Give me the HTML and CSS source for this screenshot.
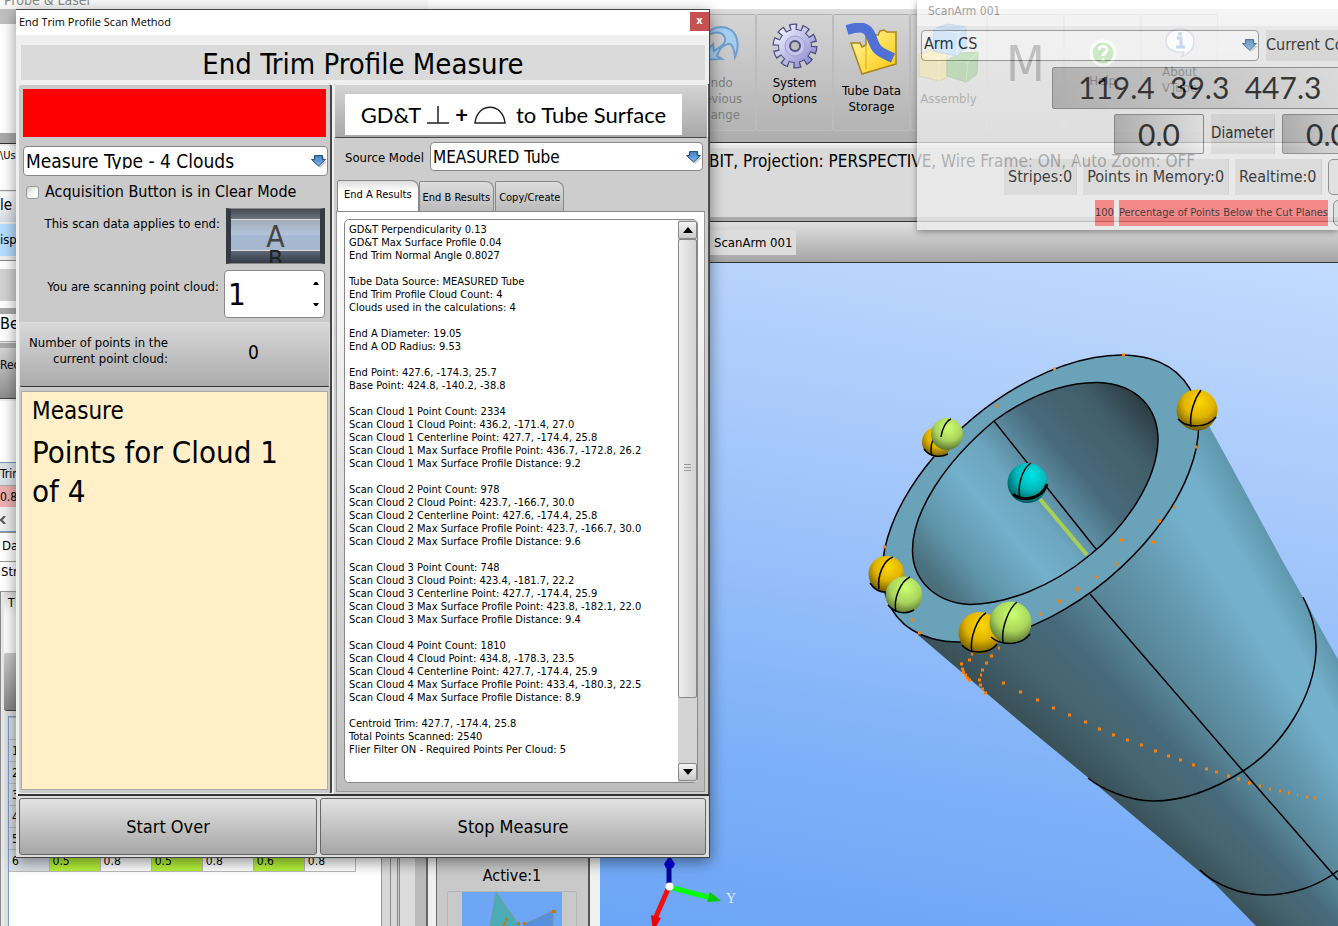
FILE: index.html
```html
<!DOCTYPE html>
<html lang="en">
<head>
<meta charset="utf-8">
<title>End Trim Profile Scan Method</title>
<link rel="stylesheet" href="styles.css">
</head>
<body>
<svg width="0" height="0" class="defs" aria-hidden="true">
  <defs>
    <linearGradient id="arrowFill" x1="0" y1="0" x2="0" y2="1"><stop offset="0" stop-color="#2c6cae"/><stop offset="1" stop-color="#8fc0ee"/></linearGradient>
    <symbol id="dropArrow" viewBox="0 0 16 14">
      <path d="M4 3h9v5h3l-7 6-7-6h2z" fill="#000" opacity=".2"/>
      <path d="M3.500 1.500h8v4h3L7.500 12 .5 5.500h3z" fill="url(#arrowFill)" stroke="#1f558f"/>
      <path d="M6 2v4M9 2v4" stroke="#8ab9e6" opacity=".6"/>
    </symbol>
    <radialGradient id="gold" cx=".55" cy=".3" r=".75"><stop offset="0" stop-color="#ffd800"/><stop offset=".5" stop-color="#e0b400"/><stop offset="1" stop-color="#5f4c00"/></radialGradient>
    <radialGradient id="lime" cx=".55" cy=".3" r=".75"><stop offset="0" stop-color="#ccff70"/><stop offset=".55" stop-color="#a9d45c"/><stop offset="1" stop-color="#4e642b"/></radialGradient>
    <radialGradient id="cyan" cx=".6" cy=".3" r=".75"><stop offset="0" stop-color="#00e4e4"/><stop offset=".5" stop-color="#00b9bc"/><stop offset="1" stop-color="#004d50"/></radialGradient>
    <linearGradient id="bore" gradientUnits="userSpaceOnUse" x1="930" y1="575" x2="1150" y2="385">
      <stop offset="0" stop-color="#4a707e"/><stop offset=".13" stop-color="#6096ab"/><stop offset=".3" stop-color="#73b0cb"/><stop offset=".42" stop-color="#6ca6bf"/><stop offset=".62" stop-color="#476a7b"/><stop offset=".82" stop-color="#415d69"/><stop offset="1" stop-color="#222f33"/>
    </linearGradient>
    <linearGradient id="folder" x1="0" y1="0" x2="1" y2="1"><stop offset="0" stop-color="#fff7b0"/><stop offset="1" stop-color="#ffc800"/></linearGradient>
    <linearGradient id="gear" gradientUnits="userSpaceOnUse" x1="-16" y1="-16" x2="16" y2="16"><stop offset="0" stop-color="#f0f0fd"/><stop offset="1" stop-color="#8f8fd0"/></linearGradient>
  </defs>
</svg>

<div class="app">
  <aside class="side">
    <div class="side-title">Probe &amp; Laser</div>
    <div class="s-ribbon"></div>
    <div class="s-path">\Use</div>
    <div class="s-file">le</div>
    <div class="s-disp">isp</div>
    <div class="s-blank"></div>
    <div class="s-bend">Be</div>
    <button class="s-rec" type="button">Rec</button>
    <div class="s-white"></div>
    <div class="s-trim">Trim</div>
    <div class="s-bad">0.8</div>
    <div class="s-scroll"><svg width="6" height="8" viewBox="0 0 6 8"><path d="M5 0 1 4l4 4" fill="none" stroke="#555" stroke-width="2"/></svg></div>
    <div class="s-data">Da</div>
    <div class="s-str">Str</div>
    <div class="s-page">
      <div class="s-tab">T</div>
      <button class="s-btn" type="button" aria-label="Tool"></button>
      <div class="s-sheet">
        <table class="sheet">
          <tr><th></th><td></td><td></td><td></td><td></td><td></td><td></td></tr>
          <tr><th>1</th><td></td><td></td><td></td><td></td><td></td><td></td></tr>
          <tr><th>2</th><td></td><td></td><td></td><td></td><td></td><td></td></tr>
          <tr><th>3</th><td></td><td></td><td></td><td></td><td></td><td></td></tr>
          <tr><th>4</th><td></td><td></td><td></td><td></td><td></td><td></td></tr>
          <tr><th>5</th><td></td><td></td><td></td><td></td><td></td><td></td></tr>
          <tr><th>6</th><td class="ok">0.5</td><td>0.8</td><td class="ok">0.5</td><td>0.8</td><td class="ok">0.6</td><td>0.8</td></tr>
        </table>
      </div>
    </div>
  </aside>

  <main class="main">
    <div class="strip"></div>
    <div class="toolbar">
      <button class="tool off" type="button">
        <svg width="50" height="46" viewBox="0 0 50 46"><path d="M6 37 20 21l1 7c8-5 14-9 10-15-3-5-12-5-20 2 6-11 18-14 27-8 8 6 8 18 4 27-1-9-3-14-7-13-5 1-9 5-11 12l5 3z" fill="#a5cdf0" stroke="#6f9fd0" stroke-width="2"/></svg>
        <span>Undo<br>Previous<br>Change</span>
      </button>
      <button class="tool" type="button">
        <svg width="46" height="46" viewBox="-23 -23 46 46">
          <circle r="18" fill="none" stroke="#4c4c85" stroke-width="9" stroke-dasharray="7 4.310"/>
          <circle r="17" fill="#4c4c85"/>
          <circle r="18" fill="none" stroke="url(#gear)" stroke-width="6.500" stroke-dasharray="4.600 6.710" stroke-dashoffset="-1.200"/>
          <circle r="16" fill="url(#gear)"/><circle r="10" fill="#c4c4ea" stroke="#9f9fd6"/><circle r="5" fill="#bdbdbd" stroke="#50507f" stroke-width="2"/>
        </svg>
        <span>System<br>Options</span>
      </button>
      <button class="tool" type="button">
        <svg width="52" height="54" viewBox="0 0 52 54"><path d="M5 20h9l2 4 4-2V12h12l2-4 4-1 3 2h9v32L16 51z" fill="url(#folder)" stroke="#a88420" stroke-width="1.500"/><path d="M20 22v24" stroke="#d9a90a"/><path d="M1 7c13-4 20-4 24 6 5 13 4 14 22 22" fill="none" stroke="#4f70d4" stroke-width="10"/></svg>
        <span>Tube Data<br>Storage</span>
      </button>
      <button class="tool" type="button">
        <svg width="62" height="62" viewBox="0 0 62 60"><path d="M1 30 14 26l15 4v24l-8 3L1 52z" fill="#e6c648" stroke="#a88f2a"/><path d="M21 34v23M1 30l20 4 8-3" stroke="#f7e48a" fill="none"/><path d="m29 36 14-7 17-1-1 22-11 8-19-6z" fill="#3f9c2a" stroke="#2d731e"/><path d="M29 36 50 38l10-10M50 38l-2 19" stroke="#81cc6c" fill="none"/><path d="M16 5 29 0l19 3v20l-9 9-24-5z" fill="#64a6e4" stroke="#3c7cb8"/><path d="m16 5 24 4 8-6M40 9l-1 22" stroke="#bfdefa" fill="none"/></svg>
        <span>Assembly</span>
      </button>
      <button class="tool big" type="button">M</button>
      <button class="tool help" type="button">
        <svg width="28" height="28" viewBox="0 0 28 28"><circle cx="14" cy="14" r="12" fill="#3fb526" stroke="#fff" stroke-width="3"/><path d="M10 11c0-5 8-5 8 0 0 3-4 3-4 6M14 19v3" fill="none" stroke="#fff" stroke-width="3"/></svg>
        <span>Help</span>
      </button>
      <button class="tool about" type="button">
        <svg width="30" height="30" viewBox="0 0 30 30"><path d="M15 1c8 0 14 5 14 12 0 8-5 13-13 16 3-3 3-5 3-5C9 25 1 21 1 13 1 6 7 1 15 1z" fill="#f3f3fd" stroke="#8888a8" stroke-width="1.500"/><path d="M12 10h4v9m-5 0h9" stroke="#2f6fd0" stroke-width="3" fill="none"/><circle cx="15" cy="6" r="2" fill="#2f6fd0"/></svg>
        <span>About<br>VTube</span>
      </button>
    </div>
    <div class="info">BIT, Projection: PERSPECTIVE, Wire Frame: ON, Auto Zoom: OFF</div>
    <div class="devices"><span class="device">ScanArm 001</span></div>
    <div class="work">
      <div class="bends">
        <div class="bend-panel">
          <div class="active">Active:1</div>
          <div class="thumb">
            <svg width="100" height="35" viewBox="0 0 100 35"><path d="M0 0h100v35H0z" fill="#6ea6f6"/><path d="M34 0 57 33l2 2H28z" fill="#4cabb5" stroke="#7d9a9a"/><path d="M91 19 63 32l-3 3h31z" fill="#568fdc" stroke="#7d8ea6"/><g fill="#c87800"><path d="M43 26h3v3h-3zM41 30h3v3h-3zM55 30h3v3h-3zM61 30h3v3h-3zM90 18h4v3h-4zM10 34h3v1h-3z"/></g></svg>
          </div>
        </div>
      </div>
      <div class="view">
        <svg class="scene" viewBox="600 263 738 663" preserveAspectRatio="xMinYMin slice" role="img" aria-label="Tube end with scanned points">
          <clipPath id="tubeClip"><path d="M918 635 L1018 720 L1085 775 L1200 872 L1215 884 L1256 926 V940 H1345 V672 L1282 560 L1230 464 L1203 415 L1100 440 L930 560z"/></clipPath>
          <g clip-path="url(#tubeClip)">
            <foreignObject x="600" y="263" width="738" height="680"><div class="tube-skin"></div></foreignObject>
          </g>
          <g transform="rotate(-39.600 1040.500 498.500)"><ellipse cx="1040.500" cy="498.500" rx="186" ry="105" fill="#6aa2ba" stroke="#000" stroke-width="1.500"/></g>
          <path d="M1158 440C1157 482 1124 528 1090 555 1050 588 1005 604 970 604.500 935 603 913 580 912.500 551 912 512 945 462 994 421 1030 395 1066 382 1098 382.500 1138 384 1158 409 1158 440z" fill="url(#bore)" stroke="#000" stroke-width="1.500"/>
          <g fill="none" stroke="#000" stroke-width="1.500">
            <path d="M994 421 1096 549M1090 594l153 177 95 109"/>
            <path d="M1088 778c12 10 40 23 65 23 30 0 62-12 90-30 40-25 71-75 73-120 1-22-5-38-13-54"/>
            <path d="M1200 870c14 14 40 25 65 25 25 0 53-8 75-26"/>
          </g>
          <path d="M1040 499l47 56" stroke="#a6d052" stroke-width="4"/>
          <path class="scan-points" d="M918 633h3M911 620h3M1122 355h3M1053 369h3M996 406h2M883 547h3M1195 447h2M1173 507h3M1158 521h3M1152 542h3M1120 540h3M1115 564h3M1095 577h3M1076 589h3M1058 601h3M1039 614h3M998 648h2M990 656h3M985 663h3M981 670h3M980 675h2M978 680h3M979 685h3M981 689h3M984 693h3M971 654h2M968 660h3M960 664h3M961 669h3M962 672h3M964 675h3M966 678h3M968 680h3M1002 683h3M1019 692h3M1036 700h3M1052 708h3M1068 715h3M1084 722h3M1098 729h3M1112 735h3M1140 745h3M1154 751h3M1167 756h3M1179 760h3M1192 765h3M1205 769h3M1215 772h3M1227 776h3M1237 779h3M1248 783h3M1259 786h2M1269 789h2M1279 791h2M1288 793h2M1297 795h1M1306 797h2M1314 798h2M1126 740h3"/>
          <g stroke="#000" stroke-width="1.500" fill="none">
            <circle cx="937" cy="442" r="15" fill="url(#gold)" stroke="none"/><path d="M932 456c-3-8 1-18 5-25M924 449c6 8 16 9 24 5"/>
            <circle cx="947" cy="434" r="16" fill="url(#lime)" stroke="none"/><path d="M941 437c1-8 5-16 10-18"/>
            <circle cx="1197" cy="410" r="20.500" fill="url(#gold)" stroke="none"/><path d="M1191 427c-2-14 4-29 10-37M1178 419c8 9 29 10 38-2"/>
            <circle cx="1027.500" cy="483" r="20" fill="url(#cyan)" stroke="none"/><path d="M1020 499c-3-13 2-30 11-36"/><path d="M1013 494c8 8 29 6 34-10" stroke-width="3"/>
            <circle cx="886.500" cy="574" r="18" fill="url(#gold)" stroke="none"/><path d="M879 589c-2-14 5-29 14-32M870 583c5 8 12 10 20 9"/>
            <circle cx="904" cy="595" r="18.500" fill="url(#lime)" stroke="none"/><path d="M896 612c-3-14 5-31 14-35M888 605c7 8 17 10 26 5"/>
            <circle cx="979.500" cy="633" r="21" fill="url(#gold)" stroke="none"/><path d="M972 652c-3-14 6-35 14-39M962 645c8 10 28 9 35-1"/>
            <circle cx="1010.500" cy="622.500" r="21" fill="url(#lime)" stroke="none"/><path d="M1003 642c-2-14 6-34 14-40M991 637c10 9 30 9 39-3"/>
          </g>
          <g>
            <path d="M669 887v-20" stroke="#00009c" stroke-width="5"/><path d="m664 864 4-6h3l4 6-2 4h-7z" fill="#0000e0"/>
            <path d="M669 887l42 11" stroke="#0f0" stroke-width="5"/><path d="m710 892 11 9-14 1z" fill="#0c0"/>
            <path d="m668 889-13 30" stroke="#f01010" stroke-width="5"/><path d="m651 915 10 3-8 14z" fill="#e00"/>
            <circle cx="669.500" cy="886.500" r="4" fill="#fff"/>
            <text x="726" y="903" class="axis">Y</text>
          </g>
        </svg>
      </div>
    </div>
  </main>
</div>

<section class="arm" aria-label="ScanArm 001">
  <div class="arm-title">ScanArm 001</div>
  <div class="arm-row">
    <div class="combo arm-combo"><select aria-label="Coordinate system"><option>Arm CS</option></select><svg width="16" height="14"><use href="#dropArrow"/></svg></div>
    <span class="chip snug">Current Coordinates</span>
  </div>
  <div class="arm-row r-xyz"><output class="lcd xyz">119.4&nbsp; 39.3&nbsp; 447.3</output></div>
  <div class="arm-row r-dia"><output class="lcd dia">0.0</output><span class="chip tight">Diameter</span><output class="lcd dia">0.0</output></div>
  <div class="arm-row r-counts"><span class="chip">Stripes:0</span><span class="chip">Points in Memory:0</span><span class="chip">Realtime:0</span><span class="slot"></span></div>
  <div class="arm-row r-pct"><span class="alert">100</span><span class="alert">Percentage of Points Below the Cut Planes</span><span class="slot"></span></div>
</section>

<section class="dialog" role="dialog" aria-labelledby="dlgTitle">
  <header class="dlg-bar"><span id="dlgTitle">End Trim Profile Scan Method</span><button class="close" type="button" aria-label="Close">x</button></header>
  <h1 class="heading">End Trim Profile Measure</h1>
  <div class="dlg-body">
    <div class="left">
      <div class="setup">
        <div class="status"></div>
        <div class="combo type"><select aria-label="Measure type"><option>Measure Type - 4 Clouds</option></select><svg width="16" height="14"><use href="#dropArrow"/></svg></div>
        <label class="acq"><input type="checkbox">Acquisition Button is in Clear Mode</label>
        <div class="field">
          <span>This scan data applies to end:</span>
          <div class="wheel"><span class="cur">A</span><span class="next">B</span></div>
        </div>
        <div class="field cloud">
          <label for="cloud">You are scanning point cloud:</label>
          <div class="spin"><input id="cloud" type="text" value="1"><svg width="8" height="26" viewBox="0 0 8 26"><path d="M1 4h6L5 1H3zM1 22h6l-2 3H3z"/></svg></div>
        </div>
      </div>
      <div class="count"><span>Number of points in the<br>current point cloud:</span><output>0</output></div>
      <div class="note"><p class="n1">Measure</p><p class="n2">Points for Cloud 1 of 4</p></div>
    </div>
    <div class="right">
      <div class="gdt"><div class="gdt-label">GD&amp;T
        <svg width="22" height="18" viewBox="0 0 22 18"><path d="M0 17h22M11 17V0" stroke="#222" stroke-width="1.500"/></svg>
        <b>+</b>
        <svg width="32" height="18" viewBox="0 0 32 18"><path d="M1 17C3-4 29-4 31 17z" fill="none" stroke="#222" stroke-width="1.500"/></svg>
        <span class="to">to Tube Surface</span></div></div>
      <div class="source"><label for="src">Source Model</label><div class="combo"><select id="src"><option>MEASURED Tube</option></select><svg width="16" height="14"><use href="#dropArrow"/></svg></div></div>
      <div class="tabs" role="tablist"><button class="tab on" role="tab" type="button">End A Results</button><button class="tab" role="tab" type="button">End B Results</button><button class="tab" role="tab" type="button">Copy/Create</button></div>
      <div class="page">
        <div class="results">
<pre class="log">GD&amp;T Perpendicularity 0.13
GD&amp;T Max Surface Profile 0.04
End Trim Normal Angle 0.8027

Tube Data Source: MEASURED Tube
End Trim Profile Cloud Count: 4
Clouds used in the calculations: 4

End A Diameter: 19.05
End A OD Radius: 9.53

End Point: 427.6, -174.3, 25.7
Base Point: 424.8, -140.2, -38.8

Scan Cloud 1 Point Count: 2334
Scan Cloud 1 Cloud Point: 436.2, -171.4, 27.0
Scan Cloud 1 Centerline Point: 427.7, -174.4, 25.8
Scan Cloud 1 Max Surface Profile Point: 436.7, -172.8, 26.2
Scan Cloud 1 Max Surface Profile Distance: 9.2

Scan Cloud 2 Point Count: 978
Scan Cloud 2 Cloud Point: 423.7, -166.7, 30.0
Scan Cloud 2 Centerline Point: 427.6, -174.4, 25.8
Scan Cloud 2 Max Surface Profile Point: 423.7, -166.7, 30.0
Scan Cloud 2 Max Surface Profile Distance: 9.6

Scan Cloud 3 Point Count: 748
Scan Cloud 3 Cloud Point: 423.4, -181.7, 22.2
Scan Cloud 3 Centerline Point: 427.7, -174.4, 25.9
Scan Cloud 3 Max Surface Profile Point: 423.8, -182.1, 22.0
Scan Cloud 3 Max Surface Profile Distance: 9.4

Scan Cloud 4 Point Count: 1810
Scan Cloud 4 Cloud Point: 434.8, -178.3, 23.5
Scan Cloud 4 Centerline Point: 427.7, -174.4, 25.9
Scan Cloud 4 Max Surface Profile Point: 433.4, -180.3, 22.5
Scan Cloud 4 Max Surface Profile Distance: 8.9

Centroid Trim: 427.7, -174.4, 25.8
Total Points Scanned: 2540
Flier Filter ON - Required Points Per Cloud: 5</pre>
          <div class="bar">
            <button class="step" type="button" aria-label="Scroll up"><svg width="10" height="6" viewBox="0 0 10 6"><path d="M0 6h10L5 0z"/></svg></button>
            <div class="grip"><svg width="7" height="8" viewBox="0 0 7 8"><path d="M0 .5h7M0 3.500h7M0 6.500h7" stroke="#999"/></svg></div>
            <div class="gutter"></div>
            <button class="step" type="button" aria-label="Scroll down"><svg width="10" height="6" viewBox="0 0 10 6"><path d="M0 0h10L5 6z"/></svg></button>
          </div>
        </div>
      </div>
    </div>
  </div>
  <footer class="dlg-foot"><button class="start" type="button">Start Over</button><button class="stop" type="button">Stop Measure</button></footer>
</section>
</body>
</html>
```
FILE: styles.css
```css
* { box-sizing: border-box; }
html, body { height: 100%; }
body { margin: 0; overflow: hidden; position: relative; background: #f0f0f0; color: #000; font: 13px/16px "DejaVu Sans Condensed", "DejaVu Sans", sans-serif; }
button, input, select, output { font: inherit; color: inherit; }
.defs { position: absolute; }

.app { display: grid; grid-template-columns: 428px 1fr; height: 100%; }

/* left column */
.side { display: flex; flex-direction: column; overflow: hidden; white-space: nowrap; background: #eee; min-height: 0; }
.side > * { flex: none; }
.side-title { height: 9px; padding-left: 4px; line-height: 0; background: #f8f8f8; color: #888; font-size: 14px; overflow: hidden; }
.s-ribbon { height: 134px; border-top: 15px solid #c0c0c0; border-bottom: 10px solid #aaa; background: #fff; box-shadow: 0 1px #333; }
.s-path { height: 45px; margin-top: 3px; padding-top: 2px; background: #fff; border-bottom: 1px solid #999; font-size: 11px; }
.s-file { height: 30px; background: linear-gradient(#fff, #d8dde6); line-height: 26px; font-size: 15px; margin-top: 1px; }
.s-disp { height: 32px; margin-top: 2px; background: #b5dcff; line-height: 32px; }
.s-blank { height: 48px; margin: 4px 0 0; border-top: 1px solid #888; background: linear-gradient(#fff 8px, #d2d2d2 8px 40px, #fff 40px); }
.s-bend { height: 34px; border-top: 6px solid #aaa; border-bottom: 1px solid #aaa; background: #fff; line-height: 19px; font-size: 16px; }
.s-rec { height: 56px; padding: 0 0 16px; margin-top: 1px; border: 0; border-top: 5px solid #aaa; border-bottom: 1px solid #444; text-align: left; background: linear-gradient(#d4d4d4, #8e8e8e); font-size: 12px; }
.s-white { height: 62px; margin-top: 2px; background: linear-gradient(90deg, #fff, #ddd); border-bottom: 1px solid #7c9cbf; }
.s-trim { height: 22px; background: #dde2ea; line-height: 22px; font-size: 12px; }
.s-bad { height: 22px; background: #f0b0b0; line-height: 22px; font-size: 12px; border-top: 1px solid #aaa; }
.s-scroll { height: 25px; padding-top: 6px; border-bottom: 1px solid #7c9cbf; }
.s-scroll svg { display: block; margin-top: 3px; }
.s-data { height: 30px; padding: 5px 2px; background: #fff; border-top: 1px solid #999; border-bottom: 1px solid #999; }
.s-str { height: 30px; padding: 2px 1px; background: #fff; border-bottom: 1px solid #999; }
.side > .s-page { flex: 1; min-height: 0; border-left: 1px solid #888; padding: 2px 0 0 3px; background: linear-gradient(90deg, #eee, #ddd 6px, #aaa); }
.s-tab { height: 59px; padding: 1px 4px; background: linear-gradient(#e0e0e0, #fff 20px); font-size: 12px; }
.s-btn { display: block; width: 60px; height: 58px; border: 0; border-bottom: 1px solid #444; border-radius: 3px; background: linear-gradient(#ccc, #888); }
.s-sheet { width: 374px; height: 100%; margin: 5px 0 0 4px; border: 1px solid #7c9cbf; background: #fff; box-shadow: 8px 0 #d8d8d8, 9px 0 #888, 15px 0 #d8d8d8, 16px 0 #888, 17px 0 #ccc, 18px 0 #888, 33px 0 #dcdcdc, 44px 0 #bbb, 46px 0 #666; }
.sheet { table-layout: fixed; width: 347px; border-collapse: collapse; font-size: 12px; line-height: 16px; }
.sheet th, .sheet td { width: 51px; height: 22px; padding: 0 3px; border: 1px solid #bbb; text-align: left; font-weight: normal; background: #fff; }
.sheet th { width: 40px; background: #dadfe6; border-left: 0; }
.sheet td.ok { background: #b5f23b; }

/* main column */
.main { display: flex; flex-direction: column; min-width: 0; min-height: 0; }
.strip { flex: none; height: 9px; background: #fff; }
.toolbar { flex: none; display: flex; height: 134px; padding: 5px 0 11px 251px; background: linear-gradient(#dcdcdc, #adadad); border-bottom: 1px solid #333; overflow: hidden; }
.tool { flex: none; width: 77px; padding: 8px 0 0; border: 1px solid #bcbcbc; border-top-color: #b0b0b0; border-radius: 2px; background: linear-gradient(#d4d4d4, #b4b4b4); display: flex; flex-direction: column; align-items: center; justify-content: flex-start; gap: 6px; }
.tool.off span { color: #7d7d7d; }
.tool.big { padding-top: 19px; font-size: 50px; line-height: 60px; color: #222; }
.tool.help { padding-top: 24px; }
.tool.about { padding-top: 13px; }
.info { flex: none; height: 76px; margin-top: 2px; padding: 4px 0 0 281px; font-size: 17px; line-height: 18px; background: #dadada; border-top: 3px solid #e8e8e8; border-bottom: 4px solid #aaa; box-shadow: 0 1px #333; overflow: hidden; white-space: nowrap; }
.devices { flex: none; height: 41px; margin-top: 1px; padding: 8px 0 0 282px; background: linear-gradient(#e0e0e0, #a4a4a4); border-bottom: 1px solid #333; }
.device { display: inline-block; height: 25px; padding: 5px 4px 0; background: #dcdcdc; }
.work { flex: 1; min-height: 0; display: grid; grid-template-columns: 172px 1fr; grid-template-rows: minmax(0, 1fr); }
.bends { min-height: 0; padding: 0 10px 0 8px; background: #f0f0f0; overflow: hidden; }
.bend-panel { height: 100%; padding: 604px 11px 0 10px; border-left: 1px solid #666; border-right: 2px solid #555; background: #c9c9c9; overflow: hidden; }
.active { text-align: center; font-size: 16px; line-height: 18px; }
.thumb { height: 60px; margin-top: 6px; border: 1px solid #b5b5b5; border-radius: 2px; text-align: center; }
.view { min-width: 0; min-height: 0; background: linear-gradient(190deg, #c2dbfd, #9dc2fa 45%, #7cb0f8 75%, #6ca5f6); }
.scene { display: block; width: 100%; height: 100%; }
.scene .axis { font: 14px "Liberation Serif", serif; fill: #e4efff; }
.scan-points { fill: none; stroke: #ff8000; stroke-width: 3; }
.tube-skin { width: 738px; height: 680px; background: conic-gradient(from 0deg at 1090px 1040px, #3b4f54 310.500deg, #3b535b 311.500deg, #45646f 314deg, #476a7b 317deg, #568496 319.800deg, #6295ab 323deg, #73b0cb 327deg, #73b0cb 329deg, #5d95aa 331.500deg); }

/* combo box */
.combo { position: relative; }
.combo select { display: block; width: 100%; height: 100%; padding: 0 20px 0 2px; appearance: none; border: 1px solid #888; border-radius: 4px; background: #fff; }
.combo svg { position: absolute; right: 1px; top: 8px; pointer-events: none; }

/* translucent scan arm window */
.arm { position: absolute; left: 917px; right: 0; top: 0; height: 230px; overflow: hidden; opacity: .72; background: linear-gradient(#fff 26px, #f0f0f0 26px); box-shadow: 0 2px 6px rgba(0,0,0,.5); white-space: nowrap; font-size: 16px; }
.arm-title { height: 30px; padding: 2px 11px; line-height: 18px; font-size: 12px; color: #888; }
.arm-row { display: flex; gap: 7px; padding-left: 4px; }
.arm-row > * { flex: none; }
.arm-combo { width: 338px; height: 31px; }
.arm-combo select { padding-bottom: 3px; }
.chip { display: block; padding: 0 4px; height: 31px; line-height: 30px; background: #dcdcdc; border-right: 1px solid #ccc; }
.chip.snug { padding: 0; }
.lcd { display: block; border: 1px solid #777; border-radius: 2px; background: linear-gradient(90deg, #aaa, #eee); text-align: center; font-family: Lato, sans-serif; font-size: 30px; line-height: 38px; }
.r-xyz { padding: 6px 0 0 135px; }
.xyz { width: 340px; height: 42px; padding-left: 25px; text-align: left; }
.r-dia { padding: 5px 0 0 197px; }
.dia { width: 90px; height: 40px; }
.chip.tight { height: 40px; padding: 0; line-height: 38px; font-size: 15px; }
.r-counts { padding: 5px 0 0 87px; gap: 6px; }
.r-counts .chip { height: 36px; line-height: 36px; }
.r-pct { padding: 5px 0 0 178px; gap: 5px; }
.alert { height: 26px; line-height: 26px; background: #ff6b6b; font-size: 11px; }
.slot { width: 40px; height: 36px; border: 1px solid #777; border-radius: 5px; background: #e4e4e4; }
.r-pct .slot { height: 26px; }

/* dialog */
.dialog { position: absolute; left: 16px; top: 9px; width: 694px; display: flex; flex-direction: column; background: #efefef; border: 1px solid #444; border-left: 0; box-shadow: 0 4px 14px rgba(0,0,0,.45); }
.dlg-bar { display: flex; justify-content: space-between; height: 25px; padding: 2px 0 0 3px; background: #fff; font: 11px/20px "Open Sans", sans-serif; }
.close { width: 19px; height: 19px; padding: 0 0 2px; border: 0; background: #c75050; color: #fff; font: bold 11px/16px "DejaVu Sans Condensed", sans-serif; }
.heading { margin: 10px 4px 4px 5px; height: 35px; background: #dadada; text-align: center; font-size: 29px; line-height: 38px; font-weight: normal; }
.dlg-body { display: grid; grid-template-columns: 314px 1fr; gap: 2px; margin-left: 2px; border-bottom: 2px solid #333; }
.left { display: flex; flex-direction: column; border: 1px solid #eee; border-right: 2px solid #444; background: #cacaca; border-radius: 3px; }
.setup { padding: 4px 2px 4px 4px; }
.status { height: 48px; margin-right: 2px; background: #f00; }
.type { height: 30px; margin-top: 9px; font-size: 19px; }
.acq { display: flex; align-items: center; gap: 6px; height: 32px; padding-left: 3px; font-size: 16px; white-space: nowrap; }
.acq input { appearance: none; width: 13px; height: 13px; margin: 0; border: 1px solid #999; border-radius: 3px; background: linear-gradient(135deg, #ccc, #fff 60%); }
.field { display: flex; justify-content: flex-end; gap: 6px; padding-right: 3px; }
.field > span { padding-top: 8px; }
.field label { padding-top: 9px; }
.wheel { display: flex; flex-direction: column; width: 99px; height: 56px; overflow: hidden; border: 1px solid #888; background: linear-gradient(#454a52, #6f7680 20%, #5b6878 78%, #333b46); text-align: center; border-left: 5px solid #333a42; border-right: 5px solid #333a42; }
.wheel .cur { flex: none; height: 32px; margin-top: 10px; border-top: 1px solid #ddd; border-bottom: 1px solid #ddd; background: linear-gradient(#a0acba, #b4c4da 50%, #a5b8d4 51%, #a8b8cc); color: #444; font-size: 30px; line-height: 33px; }
.wheel .next { font-size: 24px; line-height: 18px; color: #222; }
.cloud { margin-top: 6px; gap: 5px; }
.spin { position: relative; width: 101px; height: 48px; }
.spin input { width: 100%; height: 100%; padding: 0 20px 0 3px; border: 1px solid #888; border-radius: 4px; background: #fff; font-size: 31px; }
.spin svg { position: absolute; right: 5px; top: 11px; }
.count { display: flex; align-items: flex-start; height: 65px; padding: 12px 0 0 8px; border: 1px solid #ddd; border-bottom: 1px solid #333; border-radius: 3px; background: linear-gradient(#d8d8d8, #ababab); }
.count span { width: 140px; text-align: right; white-space: nowrap; }
.count output { padding: 7px 0 0 80px; font-size: 19px; line-height: 20px; }
.note { flex: 1; margin: 4px 2px 3px 2px; padding: 4px 10px; background: #fff0ca; border: 1px solid #aaa; }
.note p { margin: 0; }
.n1 { font-size: 24px; line-height: 31px; }
.n2 { font-size: 31px; line-height: 39px; padding: 6px 20px 0 0; }
.right { display: flex; flex-direction: column; background: #cdcdcd; border-right: 1px solid #555; }
.gdt { height: 54px; padding: 9px 10px; border: 1px solid #eee; border-bottom: 1px solid #444; border-radius: 3px; background: linear-gradient(#d4d4d4, #a8a8a8); }
.gdt-label { display: flex; align-items: center; justify-content: center; gap: 6px; width: 337px; height: 41px; background: #fff; font: 22px/40px Lato, sans-serif; }
.gdt-label b { font-weight: bold; }
.gdt-label .to { margin-left: 4px; }
.source { display: flex; gap: 6px; padding: 4px 5px 6px 11px; }
.source label { line-height: 32px; }
.source .combo { flex: 1; height: 29px; font-size: 17px; }
.tabs { display: flex; align-items: flex-end; padding-left: 3px; }
.tab { height: 30px; padding: 2px 3px 0; margin-right: 1px; border: 1px solid #888; border-bottom: 0; border-radius: 2px 8px 0 0; background: linear-gradient(#ddd, #bbb); font-size: 11px; }
.tab.on { height: 31px; padding: 0 6px 2px; margin-right: 0; background: linear-gradient(#ddd, #fff 10px); }
.page { margin: 0 3px 2px 2px; padding: 7px 6px 8px 7px; border: 1px solid #999; border-top-color: #888; background: linear-gradient(#fff, #bdbdbd); }
.results { display: flex; border: 1px solid #888; border-radius: 5px; background: #fff; }
.log { flex: 1; margin: 0; padding: 3px 0 26px 4px; font: 11px/13px "DejaVu Sans Condensed", "DejaVu Sans", sans-serif; }
.bar { display: flex; flex-direction: column; width: 19px; padding: 1px 0; background: #d4d4d4; }
.step { height: 18px; padding: 0; border: 1px solid #888; border-radius: 2px; background: linear-gradient(#f4f4f4, #ccc); display: grid; place-items: center; }
.grip { flex: 462; display: grid; place-items: center; border: 1px solid #888; border-radius: 2px; background: linear-gradient(90deg, #eee, #d2d2d2); }
.gutter { flex: 66; }
.dlg-foot { display: grid; grid-template-columns: 298px 1fr; gap: 3px; padding: 2px 3px 2px 3px; background: #dcdcdc; }
.dlg-foot button { height: 57px; padding: 0; border: 1px solid #666; border-radius: 3px; background: linear-gradient(#e2e2e2, #a6a6a6); font-size: 18px; }
```
